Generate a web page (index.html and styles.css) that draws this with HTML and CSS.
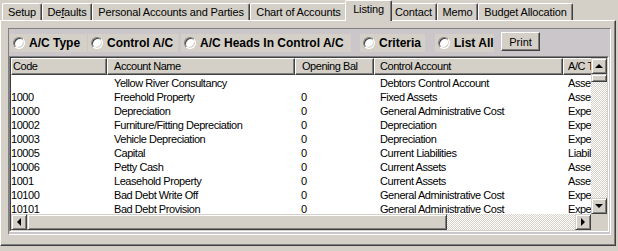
FILE: index.html
```html
<!DOCTYPE html>
<html>
<head>
<meta charset="utf-8">
<link rel="stylesheet" href="styles.css">
</head>
<body>
<div class="window">
  <div class="tabs">
    <div class="tab t-setup">Setup</div>
    <div class="tab t-defaults">De<u>f</u>aults</div>
    <div class="tab t-personal">Personal Accounts and Parties</div>
    <div class="tab t-chart">Chart of Accounts</div>
    <div class="tab active t-listing">Listing</div>
    <div class="tab t-contact">Contact</div>
    <div class="tab t-memo">Memo</div>
    <div class="tab t-budget">Budget Allocation</div>
  </div>
  <div class="panel">
    <div class="frame">
      <div class="options">
        <label class="opt o1"><span class="radio"></span>A/C Type</label>
        <label class="opt o2"><span class="radio"></span>Control A/C</label>
        <label class="opt o3"><span class="radio"></span>A/C Heads In Control A/C</label>
        <label class="opt o4"><span class="radio"></span>Criteria</label>
        <label class="opt o5"><span class="radio"></span>List All</label>
        <button class="btn">Print</button>
      </div>
      <div class="list">
        <div class="grid">
          <div class="main">
            <div class="header">
              <div class="hc c1">Code</div>
              <div class="hc c2">Account Name</div>
              <div class="hc c3">Opening Bal</div>
              <div class="hc c4">Control Account</div>
              <div class="hc c5">A/C Type</div>
            </div>
            <div class="rows">
              <div class="row"><span class="c1"></span><span class="c2">Yellow River Consultancy</span><span class="c3"></span><span class="c4">Debtors Control Account</span><span class="c5">Assets</span></div>
              <div class="row"><span class="c1">1000</span><span class="c2">Freehold Property</span><span class="c3">0</span><span class="c4">Fixed Assets</span><span class="c5">Assets</span></div>
              <div class="row"><span class="c1">10000</span><span class="c2">Depreciation</span><span class="c3">0</span><span class="c4">General Administrative Cost</span><span class="c5">Expenses</span></div>
              <div class="row"><span class="c1">10002</span><span class="c2">Furniture/Fitting Depreciation</span><span class="c3">0</span><span class="c4">Depreciation</span><span class="c5">Expenses</span></div>
              <div class="row"><span class="c1">10003</span><span class="c2">Vehicle Depreciation</span><span class="c3">0</span><span class="c4">Depreciation</span><span class="c5">Expenses</span></div>
              <div class="row"><span class="c1">10005</span><span class="c2">Capital</span><span class="c3">0</span><span class="c4">Current Liabilities</span><span class="c5">Liabilities</span></div>
              <div class="row"><span class="c1">10006</span><span class="c2">Petty Cash</span><span class="c3">0</span><span class="c4">Current Assets</span><span class="c5">Assets</span></div>
              <div class="row"><span class="c1">1001</span><span class="c2">Leasehold Property</span><span class="c3">0</span><span class="c4">Current Assets</span><span class="c5">Assets</span></div>
              <div class="row"><span class="c1">10100</span><span class="c2">Bad Debt Write Off</span><span class="c3">0</span><span class="c4">General Administrative Cost</span><span class="c5">Expenses</span></div>
              <div class="row"><span class="c1">10101</span><span class="c2">Bad Debt Provision</span><span class="c3">0</span><span class="c4">General Administrative Cost</span><span class="c5">Expenses</span></div>
            </div>
          </div>
          <div class="vscroll">
            <div class="sbtn"><span class="arr up"></span></div>
            <div class="vthumb"></div>
            <div class="track"></div>
            <div class="sbtn"><span class="arr down"></span></div>
          </div>
          <div class="hscroll">
            <div class="sbtn"><span class="arr left"></span></div>
            <div class="hthumb"></div>
            <div class="track"></div>
            <div class="sbtn"><span class="arr right"></span></div>
          </div>
          <div class="corner"></div>
        </div>
      </div>
    </div>
  </div>
</div>
</body>
</html>
```
FILE: styles.css
```css
* { box-sizing: border-box; }
html, body { margin: 0; padding: 0; }
body {
  width: 618px; height: 251px; overflow: hidden;
  background: #d4d0c8;
  font-family: "Liberation Sans", Arial, sans-serif;
  font-size: 11px; color: #000;
}
.tabs {
  display: flex; align-items: flex-end;
  height: 20px; padding-left: 2px;
  position: relative; z-index: 2;
}
.tab {
  height: 17px; line-height: 16px;
  padding: 0;
  border-top: 1px solid #fff; border-left: 1px solid #fff;
  border-right: 1px solid #404040;
  box-shadow: inset -1px 0 0 #808080;
  border-radius: 2px 2px 0 0;
  white-space: nowrap;
  text-align: center;
  letter-spacing: -0.15px;
}
.tab u { text-decoration: underline; }
.t-setup { width: 40px; }
.t-defaults { width: 50px; }
.t-personal { width: 158px; }
.t-chart { width: 97px; }
.t-listing { width: 43px; }
.t-contact { width: 47px; }
.t-memo { width: 41px; }
.t-budget { width: 95px; }
.tab.active {
  height: 21px; margin: 0 -2px -1px; width: 47px;
  line-height: 17px; background: #d4d0c8;
  position: relative;
}
.panel {
  height: 226px; width: 616px;
  border-top: 1px solid #fff; border-left: 1px solid #fff;
  border-right: 1px solid #404040; border-bottom: 1px solid #404040;
  box-shadow: inset -1px -1px 0 #808080;
  padding: 7px 4px 10px 7px;
}
.frame {
  height: 207px;
  background: #cac6ca;
  border-top: 1px solid #808080; border-left: 1px solid #808080;
  border-right: 1px solid #fff; border-bottom: 1px solid #fff;
  display: flex; flex-direction: column;
}
.options {
  display: flex; align-items: center;
  height: 26px; padding: 4px 0 3px 1px;
}
.opt {
  display: flex; align-items: center;
  height: 18px; background: #d4d0c8;
  font-weight: bold; font-size: 12px;
  padding-left: 3px;
}
.radio {
  width: 12px; height: 12px; border-radius: 50%;
  background: #fff; margin-right: 4px;
  border: 1px solid; border-color: #808080 #fff #fff #808080;
  box-shadow: inset 1px 1px 0 #404040, inset -1px -1px 0 #d4d0c8;
}
.o1 { width: 77px; }
.o2 { width: 90px; margin-left: 1px; }
.o3 { width: 170px; margin-left: 3px; }
.o4 { width: 65px; margin-left: 9px; }
.o5 { width: 59px; margin-left: 10px; }
.btn {
  margin-left: 7px; width: 39px; height: 19px;
  font-family: inherit; font-size: 11px; color: #000;
  background: #d4d0c8; padding: 0;
  border: 1px solid; border-color: #fff #404040 #404040 #fff;
  box-shadow: inset -1px -1px 0 #808080;
  margin-top: -2px;
}
.list {
  margin: 1px 1px 0 0;
  height: 176px;
  border-top: 1px solid #808080; border-left: 1px solid #808080;
  border-right: 1px solid #fff; border-bottom: 1px solid #fff;
}
.grid {
  height: 100%;
  border-top: 1px solid #404040; border-left: 1px solid #404040;
  border-right: 1px solid #d4d0c8; border-bottom: 1px solid #d4d0c8;
  display: grid;
  grid-template-columns: 1fr 16px;
  grid-template-rows: 1fr 16px;
  background: #fff;
}
.main { overflow: hidden; font-size: 11px; letter-spacing: -0.45px; }
.header { display: flex; height: 17px; background: #d4d0c8; }
.hc {
  flex: none; height: 17px; line-height: 15px;
  border-top: 1px solid #fff; border-left: 1px solid #fff;
  border-right: 1px solid #404040; border-bottom: 1px solid #404040;
  box-shadow: inset -1px -1px 0 #808080;
  padding-left: 2px; white-space: nowrap; overflow: hidden;
}
.c1 { width: 96px; }
.c2 { width: 188px; }
.c3 { width: 79px; }
.c4 { width: 189px; }
.c5 { width: 60px; }
.hc.c1 { padding-left: 1px; }
.hc.c2 { padding-left: 6px; }
.hc.c3 { padding-left: 6px; }
.hc.c4 { padding-left: 5px; }
.hc.c5 { padding-left: 4px; }
.rows { padding-top: 1px; }
.row { display: flex; height: 14px; line-height: 14px; white-space: nowrap; }
.row span { flex: none; overflow: hidden; }
.row .c1 { padding-left: 0; }
.row .c2 { padding-left: 7px; }
.row .c3 { padding-left: 6px; }
.row .c4 { padding-left: 6px; }
.row .c5 { padding-left: 5px; }
.vscroll { display: flex; flex-direction: column; }
.hscroll { display: flex; }
.sbtn {
  width: 16px; height: 16px; flex: none;
  background: #d4d0c8;
  border: 1px solid; border-color: #d4d0c8 #404040 #404040 #d4d0c8;
  box-shadow: inset 1px 1px 0 #fff, inset -1px -1px 0 #808080;
  display: flex; align-items: center; justify-content: center;
}
.track {
  flex: 1;
  background: repeating-conic-gradient(#fff 0 25%, #d4d0c8 0 50%) 0 0 / 2px 2px;
}
.corner { background: #d4d0c8; }
.vthumb, .hthumb {
  flex: none; background: #d4d0c8;
  border: 1px solid; border-color: #d4d0c8 #404040 #404040 #d4d0c8;
  box-shadow: inset 1px 1px 0 #fff, inset -1px -1px 0 #808080;
}
.vthumb { height: 8px; }
.hthumb { width: 420px; }
.arr { width: 0; height: 0; border: 4px solid transparent; }
.arr.up { border-bottom-color: #000; border-top-width: 0; margin-top: -1px; }
.arr.down { border-top-color: #000; border-bottom-width: 0; }
.arr.left { border-right-color: #000; border-left-width: 0; margin-left: -1px; }
.arr.right { border-left-color: #000; border-right-width: 0; }
```
